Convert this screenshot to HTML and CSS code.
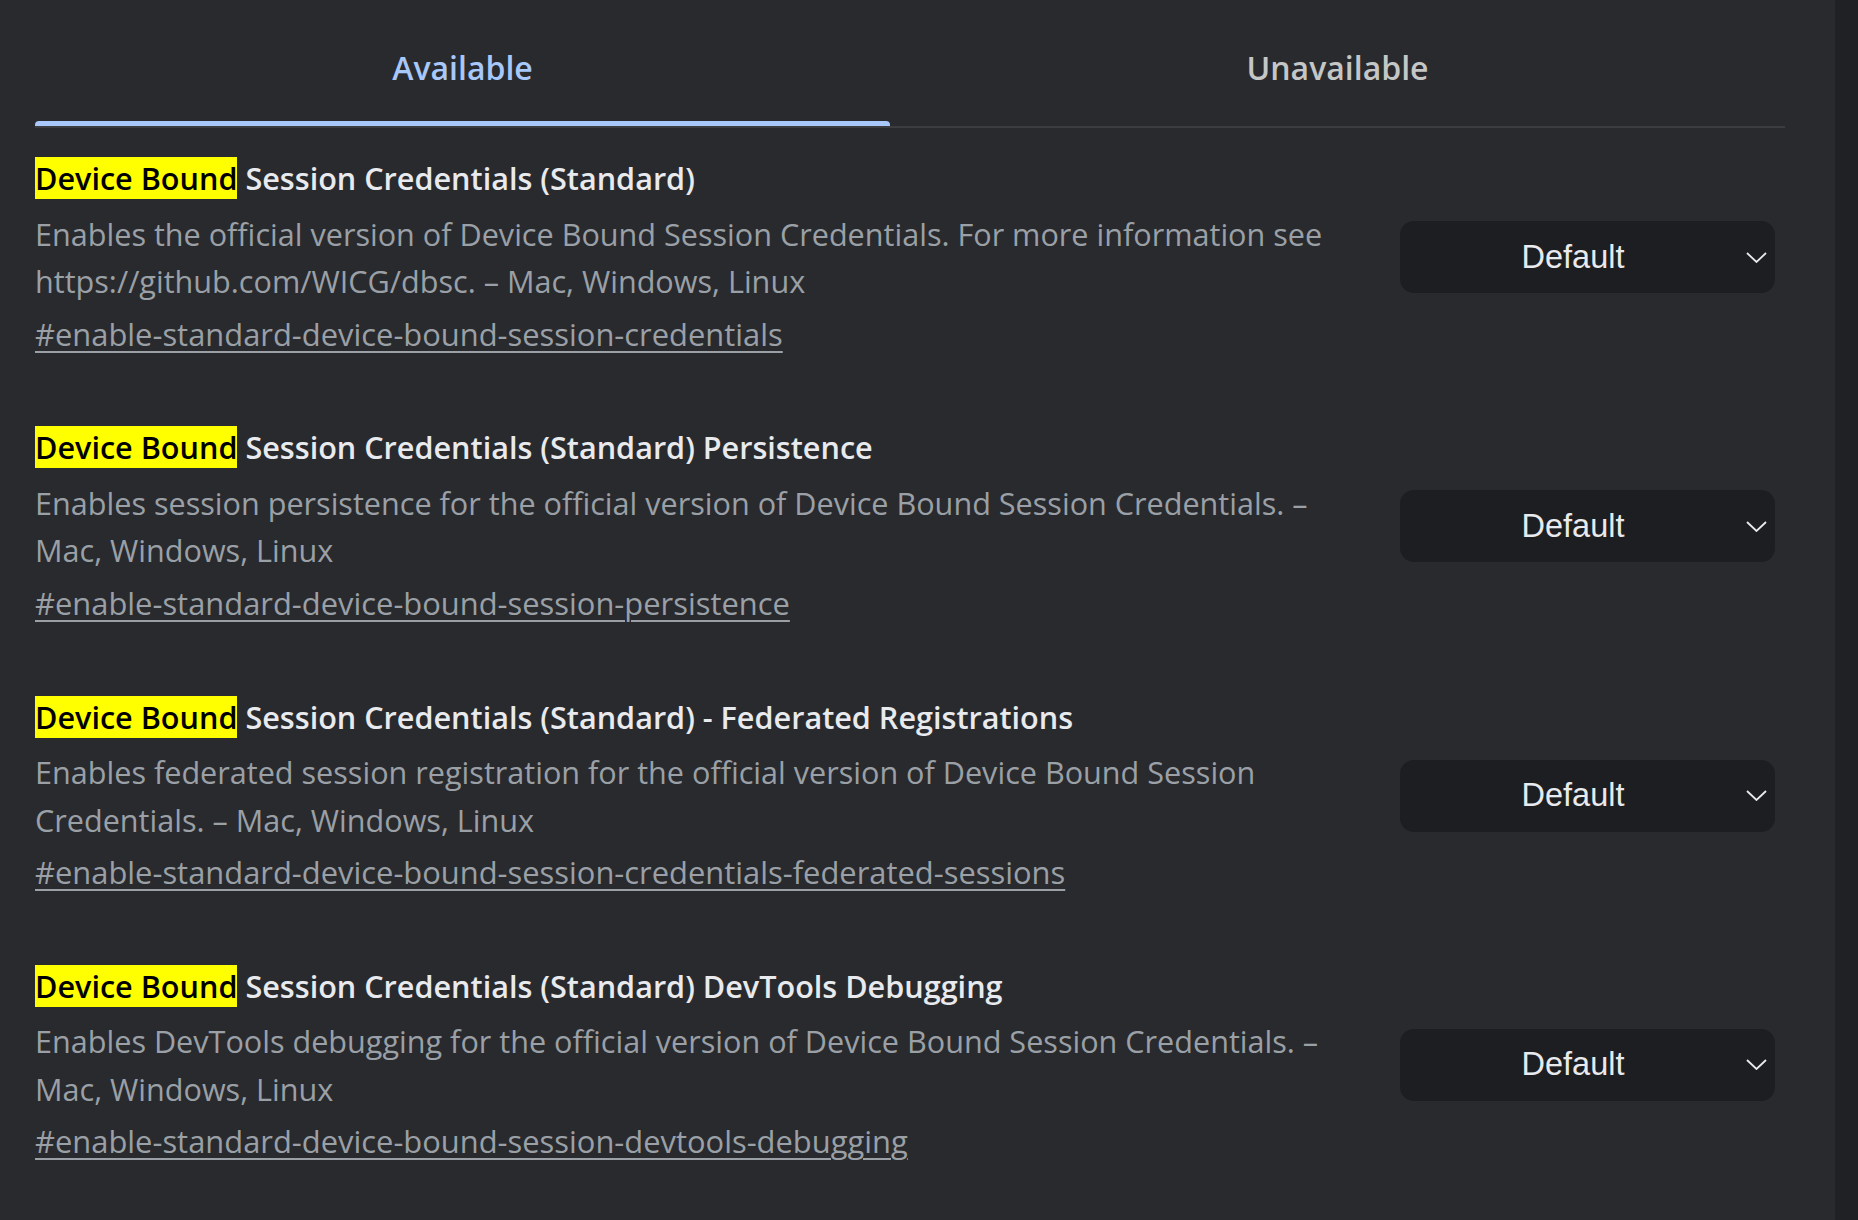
FILE: index.html
```html
<!DOCTYPE html>
<html>
<head>
    <title>Experiments</title>
    <link rel="stylesheet" href="styles.css">
</head>
<body>
    <div class="page">
        <div class="tabs">
            <div class="tab tab-active">
                <span class="tab-label">Available</span>
                <span class="tab-bar"></span>
            </div>
            <div class="tab">
                <span class="tab-label">Unavailable</span>
                <span class="tab-bar"></span>
            </div>
        </div>

        <div class="flags">
            <div class="flag">
                <div class="flag-text">
                    <div class="flag-name"><mark>Device Bound</mark> Session Credentials (Standard)</div>
                    <p class="flag-desc">Enables the official version of Device Bound Session Credentials. For more information see https://github.com/WICG/dbsc. – Mac, Windows, Linux</p>
                    <a class="flag-link" href="#enable-standard-device-bound-session-credentials">#enable-standard-device-bound-session-credentials</a>
                </div>
                <div class="select">
                    <span class="select-value">Default</span>
                    <svg class="chevron" width="21" height="11" viewBox="0 0 21 11"><polyline points="1,1 10.5,10 20,1" /></svg>
                </div>
            </div>

            <div class="flag">
                <div class="flag-text">
                    <div class="flag-name"><mark>Device Bound</mark> Session Credentials (Standard) Persistence</div>
                    <p class="flag-desc">Enables session persistence for the official version of Device Bound Session Credentials. – Mac, Windows, Linux</p>
                    <a class="flag-link" href="#enable-standard-device-bound-session-persistence">#enable-standard-device-bound-session-persistence</a>
                </div>
                <div class="select">
                    <span class="select-value">Default</span>
                    <svg class="chevron" width="21" height="11" viewBox="0 0 21 11"><polyline points="1,1 10.5,10 20,1" /></svg>
                </div>
            </div>

            <div class="flag">
                <div class="flag-text">
                    <div class="flag-name"><mark>Device Bound</mark> Session Credentials (Standard) - Federated Registrations</div>
                    <p class="flag-desc">Enables federated session registration for the official version of Device Bound Session Credentials. – Mac, Windows, Linux</p>
                    <a class="flag-link" href="#enable-standard-device-bound-session-credentials-federated-sessions">#enable-standard-device-bound-session-credentials-federated-sessions</a>
                </div>
                <div class="select">
                    <span class="select-value">Default</span>
                    <svg class="chevron" width="21" height="11" viewBox="0 0 21 11"><polyline points="1,1 10.5,10 20,1" /></svg>
                </div>
            </div>

            <div class="flag">
                <div class="flag-text">
                    <div class="flag-name"><mark>Device Bound</mark> Session Credentials (Standard) DevTools Debugging</div>
                    <p class="flag-desc">Enables DevTools debugging for the official version of Device Bound Session Credentials. – Mac, Windows, Linux</p>
                    <a class="flag-link" href="#enable-standard-device-bound-session-devtools-debugging">#enable-standard-device-bound-session-devtools-debugging</a>
                </div>
                <div class="select">
                    <span class="select-value">Default</span>
                    <svg class="chevron" width="21" height="11" viewBox="0 0 21 11"><polyline points="1,1 10.5,10 20,1" /></svg>
                </div>
            </div>
        </div>
    </div>
    <div class="scroll-track"></div>
</body>
</html>
```

FILE: styles.css
```css
html, body {
    height: 100%;
}
body {
    margin: 0;
    display: flex;
    overflow: hidden;
    background-color: #292a2e;
    font-family: "Open Sans", sans-serif;
}
.page {
    flex: 1;
    padding: 0 50px 0 35px;
}
.scroll-track {
    width: 23px;
    background-color: #202124;
}

/* tab strip */
.tabs {
    display: flex;
    border-bottom: 2px solid #3c3d41;
}
.tab {
    flex: 1;
    display: flex;
    flex-direction: column;
    align-items: center;
    padding-top: 46px;
    font-size: 32px;
    font-weight: 600;
    line-height: 44px;
    color: #c4c7c5;
}
.tab-active {
    flex: none;
    width: 855px;
    color: #a8c7fa;
}
.tab-label {
    margin-bottom: 31px;
}
.tab-bar {
    align-self: stretch;
    height: 5px;
    border-radius: 4px 4px 0 0;
}
.tab-active .tab-bar {
    background-color: #a8c7fa;
}

/* flag rows */
.flags {
    padding-top: 28px;
}
.flag {
    display: flex;
    align-items: center;
    gap: 40px;
    padding-right: 10px;
    margin-bottom: 67.3px;
}
.flag-text {
    flex: 1;
    font-size: 30.6px;
    line-height: 47.5px;
    color: #9aa0a6;
}
.flag-name {
    font-weight: 600;
    line-height: 44px;
    color: #e8eaed;
    margin-bottom: 10.5px;
}
.flag-name mark {
    background-color: #ffff00;
    color: #000;
}
.flag-desc {
    margin: 0;
}
.flag-link {
    display: inline-block;
    margin-top: 5px;
    font-size: 30.9px;
    color: #9aa0a6;
    text-decoration: underline;
    text-underline-offset: 5px;
    text-decoration-thickness: 2px;
}

/* dropdown */
.select {
    width: 375px;
    height: 72px;
    box-sizing: border-box;
    display: flex;
    align-items: center;
    padding-right: 8px;
    border-radius: 14px;
    background-color: #1d1e21;
    color: #e8eaed;
    font-family: "Liberation Sans", Arial, sans-serif;
    font-size: 32.5px;
}
.select-value {
    flex: 1;
    text-align: center;
}
.chevron polyline {
    fill: none;
    stroke: #e8eaed;
    stroke-width: 1.8;
}
```
